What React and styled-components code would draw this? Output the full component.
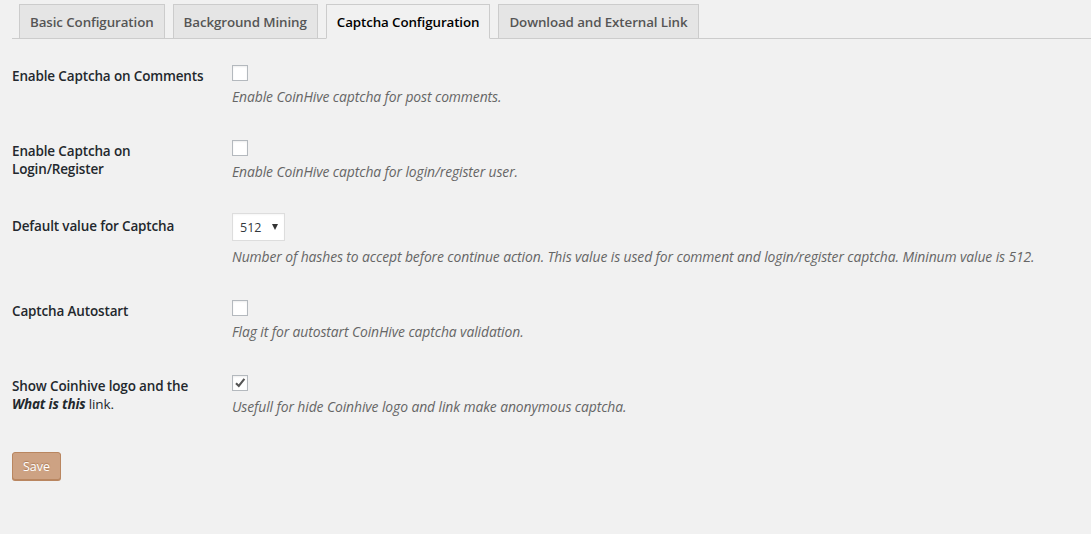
import React, { useState } from 'react';
import styled, { createGlobalStyle } from 'styled-components';

const GlobalStyle = createGlobalStyle`
  html, body {
    margin: 0;
    padding: 0;
    background: #f1f1f1;
  }
  body {
    font-family: "Open Sans", "Noto Sans", sans-serif;
    color: #444;
  }
`;

const Page = styled.div`
  padding: 4px 0 0 12px;
  min-height: 530px;
  box-sizing: border-box;
`;

const TabBar = styled.nav`
  display: flex;
  gap: 8px;
  padding-left: 7px;
  border-bottom: 1px solid #ccc;
  height: 35px;
  box-sizing: border-box;
`;

const Tab = styled.div`
  height: 35px;
  box-sizing: border-box;
  padding: 0 10px;
  display: flex;
  align-items: center;
  border: 1px solid #ccc;
  border-bottom-color: ${p => (p.$active ? '#f1f1f1' : '#ccc')};
  background: ${p => (p.$active ? '#f1f1f1' : '#e5e5e5')};
  color: ${p => (p.$active ? '#000' : '#555')};
  font-size: 13.35px;
  font-weight: 600;
  letter-spacing: -0.1px;
  white-space: nowrap;
`;

const Form = styled.div`
  margin-top: 9px;
`;

const Row = styled.div`
  display: grid;
  grid-template-columns: 210px 1fr;
`;

const Label = styled.div`
  padding: 18.5px 10px 0 0;
  font-size: 13.5px;
  line-height: 18px;
  font-weight: 600;
  color: #23282d;
  letter-spacing: -0.15px;
  em {
    font-weight: 700;
  }
  span {
    font-weight: 400;
  }
`;

const Field = styled.div`
  padding: 17px 10px 16px;
`;

const Box = styled.span`
  display: block;
  width: 16px;
  height: 16px;
  box-sizing: border-box;
  border: 1px solid #b4b9be;
  background: #fff;
  box-shadow: inset 0 1px 2px rgba(0, 0, 0, 0.07);
  position: relative;
  cursor: pointer;
  svg {
    position: absolute;
    left: 1px;
    top: 1px;
  }
`;

const Select = styled.div`
  margin-top: -2px;
  width: 53px;
  height: 28px;
  box-sizing: border-box;
  border: 1px solid #ddd;
  background: #fff;
  display: flex;
  align-items: center;
  justify-content: space-between;
  padding: 0 6px 0 7px;
  font-size: 12.5px;
  color: #32373c;
  box-shadow: inset 0 1px 2px rgba(0, 0, 0, 0.04);
`;

const Arrow = styled.span`
  width: 0;
  height: 0;
  border-left: 3.5px solid transparent;
  border-right: 3.5px solid transparent;
  border-top: 6px solid #333;
  margin-bottom: 1px;
`;

const Description = styled.p`
  margin: 6px 0 0;
  font-size: 13.9px;
  line-height: 20px;
  font-style: italic;
  color: #666;
  letter-spacing: -0.1px;
  white-space: nowrap;
`;

const SaveButton = styled.button`
  margin-top: 19px;
  width: 49px;
  height: 28px;
  padding: 0;
  border: 1px solid #b98660;
  border-radius: 3px;
  background: #cda283;
  box-shadow: 0 1px 0 #b98660;
  color: #fff;
  font-family: inherit;
  font-size: 12.5px;
  text-shadow: 0 -1px 1px #a97a57;
  cursor: pointer;
`;

function Checkbox({ checked }) {
  const [on, setOn] = useState(checked);
  return (
    <Box onClick={() => setOn(!on)}>
      {on && (
        <svg width="12" height="12" viewBox="0 0 12 12">
          <path d="M2 6.2 L4.8 9 L10.4 1.8" fill="none" stroke="#555" strokeWidth="2.1" />
        </svg>
      )}
    </Box>
  );
}

const tabs = ['Basic Configuration', 'Background Mining', 'Captcha Configuration', 'Download and External Link'];

export default function App() {
  return (
    <>
      <GlobalStyle />
      <Page>
        <TabBar>
          {tabs.map((t, i) => (
            <Tab key={t} $active={i === 2}>{t}</Tab>
          ))}
        </TabBar>
        <Form>
          <Row>
            <Label>Enable Captcha on Comments</Label>
            <Field>
              <Checkbox />
              <Description>Enable CoinHive captcha for post comments.</Description>
            </Field>
          </Row>
          <Row>
            <Label>Enable Captcha on<br />Login/Register</Label>
            <Field>
              <Checkbox />
              <Description>Enable CoinHive captcha for login/register user.</Description>
            </Field>
          </Row>
          <Row>
            <Label>Default value for Captcha</Label>
            <Field>
              <Select>512<Arrow /></Select>
              <Description>
                Number of hashes to accept before continue action. This value is used for comment and login/register captcha. Mininum value is 512.
              </Description>
            </Field>
          </Row>
          <Row>
            <Label>Captcha Autostart</Label>
            <Field>
              <Checkbox />
              <Description>Flag it for autostart CoinHive captcha validation.</Description>
            </Field>
          </Row>
          <Row>
            <Label>Show Coinhive logo and the<br /><em>What is this</em> <span>link.</span></Label>
            <Field>
              <Checkbox checked />
              <Description>Usefull for hide Coinhive logo and link make anonymous captcha.</Description>
            </Field>
          </Row>
        </Form>
        <SaveButton>Save</SaveButton>
      </Page>
    </>
  );
}
